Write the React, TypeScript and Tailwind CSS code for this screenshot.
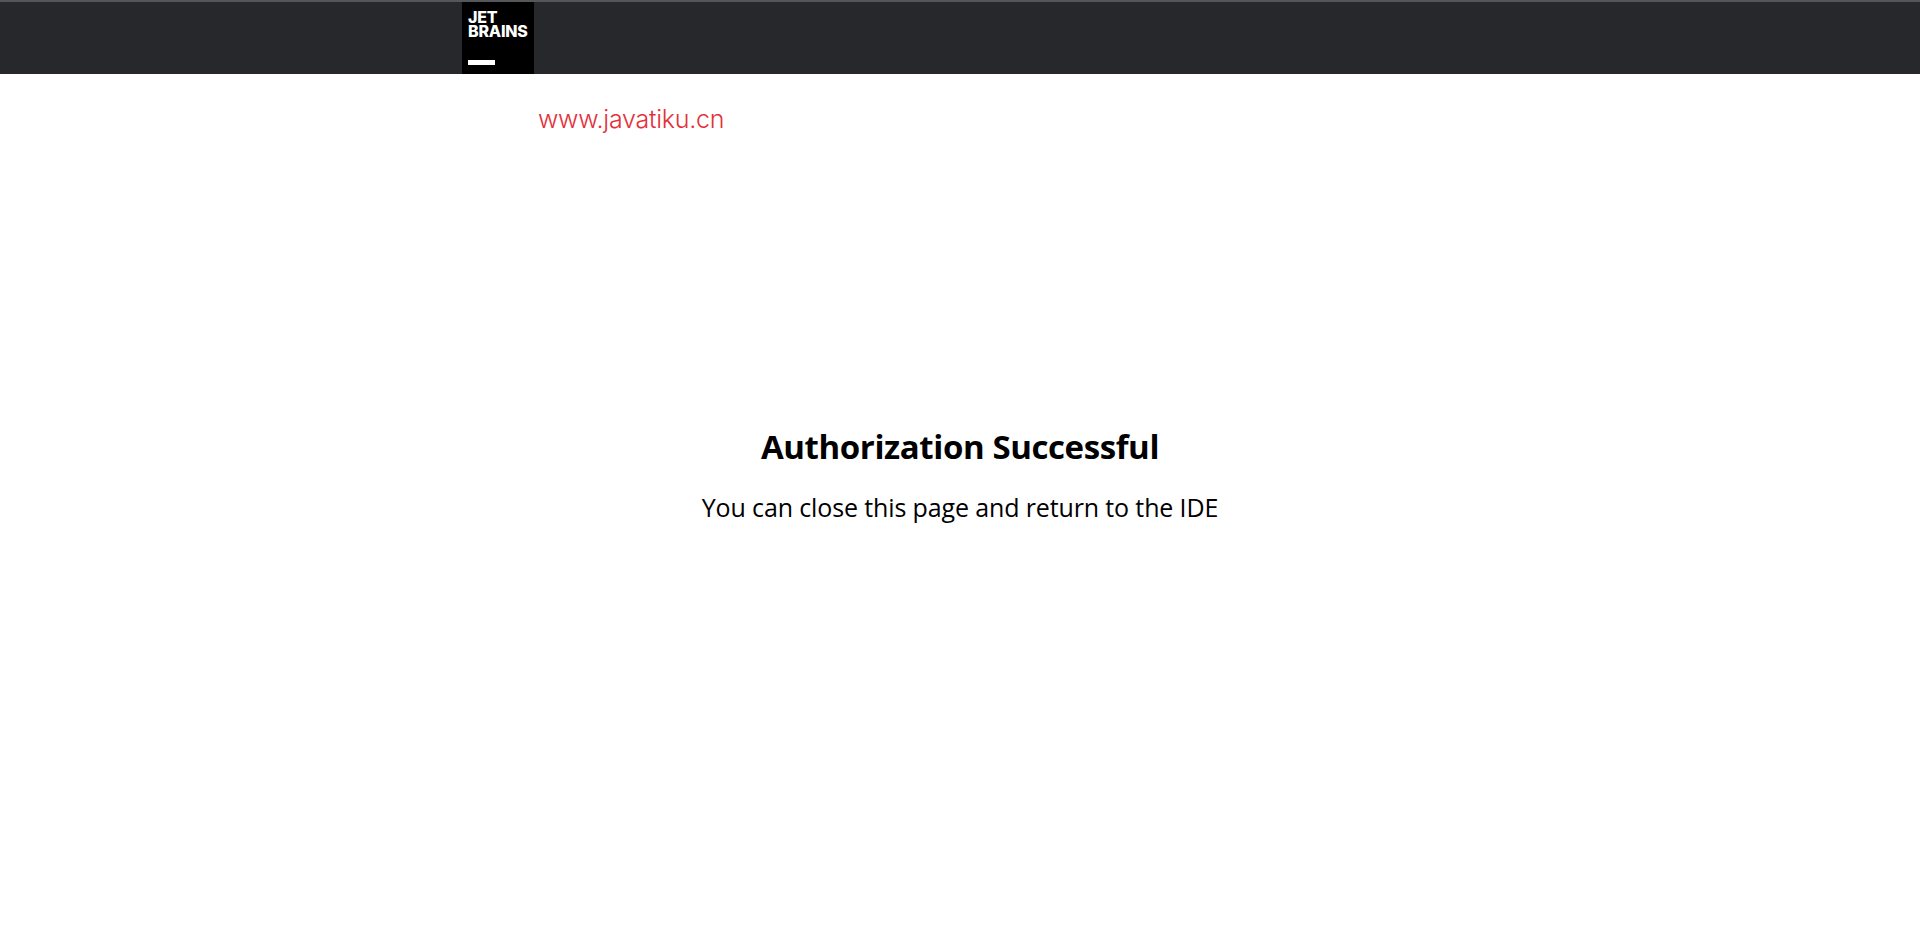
import * as React from "react";

function Logo() {
  return (
    <div className="flex h-[72px] w-[72px] flex-col bg-black pl-[6px] pt-[8px] font-['Inter',sans-serif] text-white">
      <div className="text-[16px] font-extrabold leading-[14px] tracking-[-0.2px]">JET</div>
      <div className="text-[16px] font-extrabold leading-[14px] tracking-[-0.2px]">BRAINS</div>
      <div className="mt-[22px] h-[5px] w-[27px] bg-white" />
    </div>
  );
}

export default function App() {
  return (
    <div className="flex min-h-[946px] flex-col bg-white">
      <header className="h-[74px] border-t-2 border-[#55565a] bg-[#27282c]">
        <div className="ml-[462px]">
          <Logo />
        </div>
      </header>

      <div className="ml-[538px] mt-[29px] font-['Inter',sans-serif] text-[25px] font-light leading-[32px] tracking-[-0.25px] text-[#e4303a]">
        www.javatiku.cn
      </div>

      <main className="mt-[290px] flex flex-col items-center font-['Open_Sans',sans-serif] text-black">
        <h1 className="text-[33px] font-bold leading-[44px] tracking-[-0.4px]">Authorization Successful</h1>
        <p className="mt-[22px] text-[25px] leading-[32px] tracking-[-0.13px]">You can close this page and return to the IDE</p>
      </main>
    </div>
  );
}
